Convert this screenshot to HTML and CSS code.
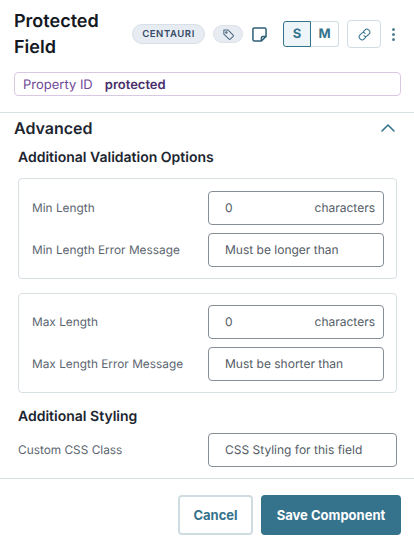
FILE: index.html
```html
<!DOCTYPE html>
<html lang="en">
<head>
<meta charset="utf-8">
<title>Protected Field</title>
<link rel="stylesheet" href="styles.css">
</head>
<body>
<div class="panel">
  <header class="header">
    <div class="top">
      <h1 class="title">Protected Field</h1>
      <div class="tools">
        <span class="badge">CENTAURI</span>
        <span class="tag-pill">
          <svg width="13" height="13" viewBox="0 0 14 14" fill="none" stroke="#4a6880" stroke-width="1.1" stroke-linejoin="round"><path d="M2 2.2h4.6l5.4 5.4a.9.9 0 0 1 0 1.3l-3.1 3.1a.9.9 0 0 1-1.3 0L2 6.6z"/><circle cx="4.7" cy="4.9" r=".8"/></svg>
        </span>
        <svg class="note" width="15" height="15" viewBox="0 0 16 16" fill="none" stroke="#2f5f75" stroke-width="1.6" stroke-linejoin="round"><path d="M2.6 1h10.8A1.6 1.6 0 0 1 15 2.6V10l-5 5H2.6A1.6 1.6 0 0 1 1 13.4V2.6A1.6 1.6 0 0 1 2.6 1z"/><path d="M15 10h-3.4A1.6 1.6 0 0 0 10 11.6V15"/></svg>
        <div class="size">
          <span class="size-btn active">S</span>
          <span class="size-btn">M</span>
        </div>
        <span class="link-btn">
          <svg width="15" height="15" viewBox="0 0 14 14" fill="none" stroke="#35738c" stroke-width="1" stroke-linecap="round"><path d="M5.9 4.3 7.6 2.6a2.2 2.2 0 0 1 3.2 0l.6.6a2.2 2.2 0 0 1 0 3.2L9.7 8.1a2.2 2.2 0 0 1-3.2 0"/><path d="M8.1 9.7 6.4 11.4a2.2 2.2 0 0 1-3.2 0l-.6-.6a2.2 2.2 0 0 1 0-3.2l1.7-1.7a2.2 2.2 0 0 1 3.2 0"/></svg>
        </span>
        <span class="dots"><i></i><i></i><i></i></span>
      </div>
    </div>
    <div class="prop">
      <span class="prop-label">Property ID</span>
      <span class="prop-value">protected</span>
    </div>
  </header>

  <main class="body">
    <div class="section-head">
      <h2 class="section-title">Advanced</h2>
      <svg width="16" height="10" viewBox="0 0 16 10" fill="none" stroke="#35738c" stroke-width="1.6" stroke-linecap="round" stroke-linejoin="round"><path d="M2 8l6-6 6 6"/></svg>
    </div>
    <div class="inner">
      <h3 class="sub">Additional Validation Options</h3>
      <div class="card">
        <div class="row">
          <span class="label">Min Length</span>
          <div class="input"><span>0</span><span>characters</span></div>
        </div>
        <div class="row">
          <span class="label">Min Length Error Message</span>
          <div class="input"><span>Must be longer than</span></div>
        </div>
      </div>
      <div class="card second">
        <div class="row">
          <span class="label">Max Length</span>
          <div class="input"><span>0</span><span>characters</span></div>
        </div>
        <div class="row">
          <span class="label">Max Length Error Message</span>
          <div class="input"><span>Must be shorter than</span></div>
        </div>
      </div>
      <h3 class="sub styling">Additional Styling</h3>
      <div class="row plain">
        <span class="label">Custom CSS Class</span>
        <div class="input wide"><span>CSS Styling for this field</span></div>
      </div>
    </div>
  </main>

  <footer class="footer">
    <button class="btn cancel">Cancel</button>
    <button class="btn save">Save Component</button>
  </footer>
</div>
</body>
</html>
```

FILE: styles.css
```css
* { box-sizing: border-box; }
html, body { margin: 0; padding: 0; background: #fff; }
body { font-family: Inter, "Liberation Sans", sans-serif; color: #1a202c; text-rendering: geometricPrecision; }
.panel { width: 414px; height: 547px; overflow: hidden; display: flex; flex-direction: column; }

.header { padding: 8px 13px 0 14px; height: 113px; border-bottom: 1px solid #d9e0e4; }
.top { display: flex; align-items: center; height: 52px; }
.title { margin: 0; width: 118px; padding-top: 1px; font-size: 18px; font-weight: 600; line-height: 26px; color: #14181f; }
.tools { display: flex; align-items: center; }
.badge { width: 73px; height: 20px; border-radius: 10px; background: #e7ecf2; border: 1px solid #d8dfe8; color: #344a66; font-size: 9.5px; font-weight: 600; letter-spacing: .6px; display: flex; align-items: center; justify-content: center; }
.tag-pill { margin-left: 8px; width: 30px; height: 18px; border-radius: 9px; background: #e7ecf2; border: 1px solid #dde3ea; display: flex; align-items: center; justify-content: center; }
.note { margin-left: 9px; }
.size { margin-left: 16px; display: flex; height: 26px; }
.size-btn { width: 28px; border: 1px solid #cfdde3; border-left: 0; border-radius: 0 3px 3px 0; color: #35738c; font-size: 13px; font-weight: 700; display: flex; align-items: center; justify-content: center; }
.size-btn.active { border: 1px solid #35738c; border-radius: 3px 0 0 3px; background: #eef5f8; }
.link-btn { margin-left: 8px; width: 34px; height: 28px; border: 1px solid #cfdde3; border-radius: 4px; display: flex; align-items: center; justify-content: center; }
.dots { margin-left: 11px; width: 4px; display: flex; flex-direction: column; gap: 2px; }
.dots i { display: block; width: 3px; height: 3px; border-radius: 50%; background: #55808f; }

.prop { margin-top: 12px; width: 387px; height: 24px; border: 1px solid #d9c8e2; border-radius: 4px; padding: 2px 0 0 8px; display: flex; align-items: center; gap: 12px; font-size: 13px; }
.prop-label { color: #6f4a97; }
.prop-value { color: #49306b; font-weight: 600; }

.body { flex: 1; padding: 0 17px 0 14px; }
.section-head { display: flex; align-items: center; justify-content: space-between; height: 30px; padding-right: 1px; }
.section-title { margin: 0; font-size: 16px; font-weight: 600; color: #1c2530; }
.inner { padding-left: 4px; }
.sub { margin: 4px 0 0; height: 20px; padding-top: 1px; font-size: 14px; font-weight: 600; line-height: 20px; color: #1c2530; }
.card { margin-top: 11px; width: 379px; height: 101px; padding: 12px 12px 11px 13px; border: 1px solid #d9e0e4; border-radius: 4px; display: flex; flex-direction: column; gap: 8px; }
.card.second { margin-top: 14px; height: 100px; padding-top: 11px; }
.row { display: flex; align-items: center; justify-content: space-between; }
.label { font-size: 11.85px; line-height: 14px; padding-bottom: 1px; color: #5b6570; }
.input { width: 176px; height: 34px; border: 1px solid #868e96; border-radius: 4px; padding: 0 8px 1px 16px; display: flex; align-items: center; justify-content: space-between; font-size: 12px; color: #545c66; }
.input.wide { width: 189px; }
.styling { margin-top: 13px; }
.plain { margin-top: 7px; }

.footer { height: 69px; border-top: 1px solid #d9e0e4; padding: 16px 13px 0 0; display: flex; justify-content: flex-end; gap: 8px; align-items: flex-start; }
.btn { height: 40px; border-radius: 4px; font-family: inherit; font-size: 13px; font-weight: 700; padding: 0; }
.cancel { width: 75px; background: #fff; border: 2px solid #cfdde3; color: #35738c; }
.save { width: 140px; background: #35738c; border: 0; color: #fff; }
```
